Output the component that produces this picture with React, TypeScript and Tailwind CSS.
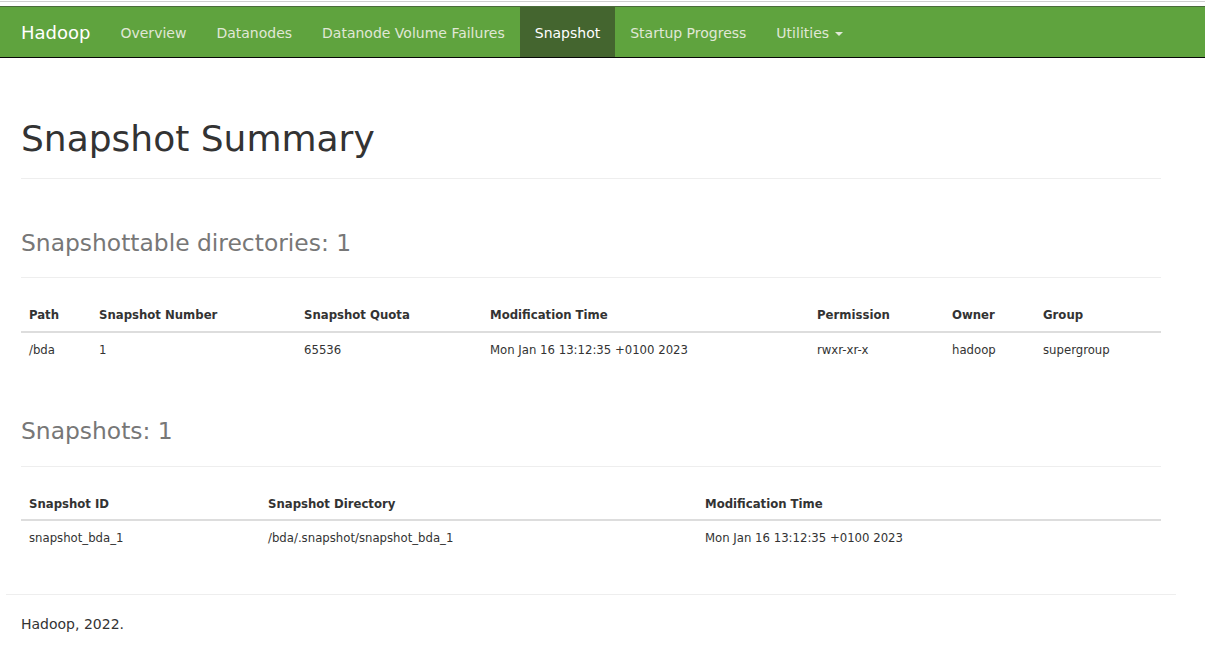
const navLinks = [
  { label: 'Overview' },
  { label: 'Datanodes' },
  { label: 'Datanode Volume Failures' },
  { label: 'Snapshot', active: true },
  { label: 'Startup Progress' },
]

const dirCols = [
  { title: 'Path', w: 'w-[70px]' },
  { title: 'Snapshot Number', w: 'w-[205px]' },
  { title: 'Snapshot Quota', w: 'w-[186px]' },
  { title: 'Modification Time', w: 'w-[327px]' },
  { title: 'Permission', w: 'w-[135px]' },
  { title: 'Owner', w: 'w-[91px]' },
  { title: 'Group', w: '' },
]

const dirRows = [
  ['/bda', '1', '65536', 'Mon Jan 16 13:12:35 +0100 2023', 'rwxr-xr-x', 'hadoop', 'supergroup'],
]

const snapCols = [
  { title: 'Snapshot ID', w: 'w-[239px]' },
  { title: 'Snapshot Directory', w: 'w-[437px]' },
  { title: 'Modification Time', w: '' },
]

const snapRows = [['snapshot_bda_1', '/bda/.snapshot/snapshot_bda_1', 'Mon Jan 16 13:12:35 +0100 2023']]

function DataTable({ cols, rows }: { cols: { title: string; w: string }[]; rows: string[][] }) {
  return (
    <table className="w-full border-collapse table-fixed font-['DejaVu_Sans_Condensed','DejaVu_Sans',sans-serif] font-stretch-condensed text-[13px] leading-[18.57px] text-[#333]">
      <thead>
        <tr>
          {cols.map((c) => (
            <th key={c.title} className={`${c.w} text-left font-bold px-2 pt-[10px] pb-[6px] border-b-2 border-[#ddd]`}>
              {c.title}
            </th>
          ))}
        </tr>
      </thead>
      <tbody>
        {rows.map((r, i) => (
          <tr key={i}>
            {r.map((cell, j) => (
              <td key={j} className="px-2 py-2 border-t border-[#ddd]">
                {cell}
              </td>
            ))}
          </tr>
        ))}
      </tbody>
    </table>
  )
}

function PageHeader({ children, className = '' }: { children: React.ReactNode; className?: string }) {
  return (
    <div className={`pb-[9px] border-b border-[#eeeeee] ${className}`}>
      <h1 className="mb-[10px] text-[36px] leading-[1.1] font-normal text-[#333]">{children}</h1>
    </div>
  )
}

export default function App() {
  return (
    <div className="min-h-[652px] bg-white font-['DejaVu_Sans',sans-serif] text-[14px] leading-[20px] text-[#333]">
      {/* browser edge */}
      <div className="h-px bg-white" />
      <div className="h-px bg-[#cfcfcf]" />
      <div className="h-[4px] bg-white" />

      {/* Navbar */}
      <nav className="bg-[#5fa33e] border-t border-[#4a6b3a] border-b border-b-[#080808]">
        <div className="w-[1170px] ml-[6px] flex items-stretch h-[50px]">
          <a className="px-[15px] pt-[16px] pb-[14px] text-[18px] leading-[20px] text-white">Hadoop</a>
          <ul className="flex">
            {navLinks.map((l) => (
              <li key={l.label}>
                <a
                  className={`block px-[15px] pt-[16px] pb-[14px] leading-[20px] ${
                    l.active ? 'bg-[#44652f] text-white' : 'text-[#e0e8d6]'
                  }`}
                >
                  {l.label}
                </a>
              </li>
            ))}
            <li>
              <a className="block px-[15px] pt-[16px] pb-[14px] leading-[20px] text-[#e0e8d6]">
                Utilities
                <span className="inline-block w-0 h-0 ml-[6px] align-middle border-t-[4px] border-x-[4px] border-x-transparent border-t-[#e0e8d6]" />
              </a>
            </li>
          </ul>
        </div>
      </nav>

      <div className="w-[1170px] ml-[6px]">
        <div className="px-[15px]">
          <PageHeader className="mt-[61px]">Snapshot Summary</PageHeader>

          <PageHeader className="mt-[40px]">
            <span className="text-[23.4px] leading-[1.1] text-[#777]">Snapshottable directories: 1</span>
          </PageHeader>

          <div className="mt-[18px]">
            <DataTable cols={dirCols} rows={dirRows} />
          </div>

          <PageHeader className="mt-[40px]">
            <span className="text-[23.4px] leading-[1.1] text-[#777]">Snapshots: 1</span>
          </PageHeader>

          <div className="mt-[18px]">
            <DataTable cols={snapCols} rows={snapRows} />
          </div>
        </div>

        {/* Footer */}
        <hr className="mt-[38px] border-0 border-t border-[#eeeeee]" />
        <p className="px-[15px] mt-[19px]">Hadoop, 2022.</p>
      </div>
    </div>
  )
}
